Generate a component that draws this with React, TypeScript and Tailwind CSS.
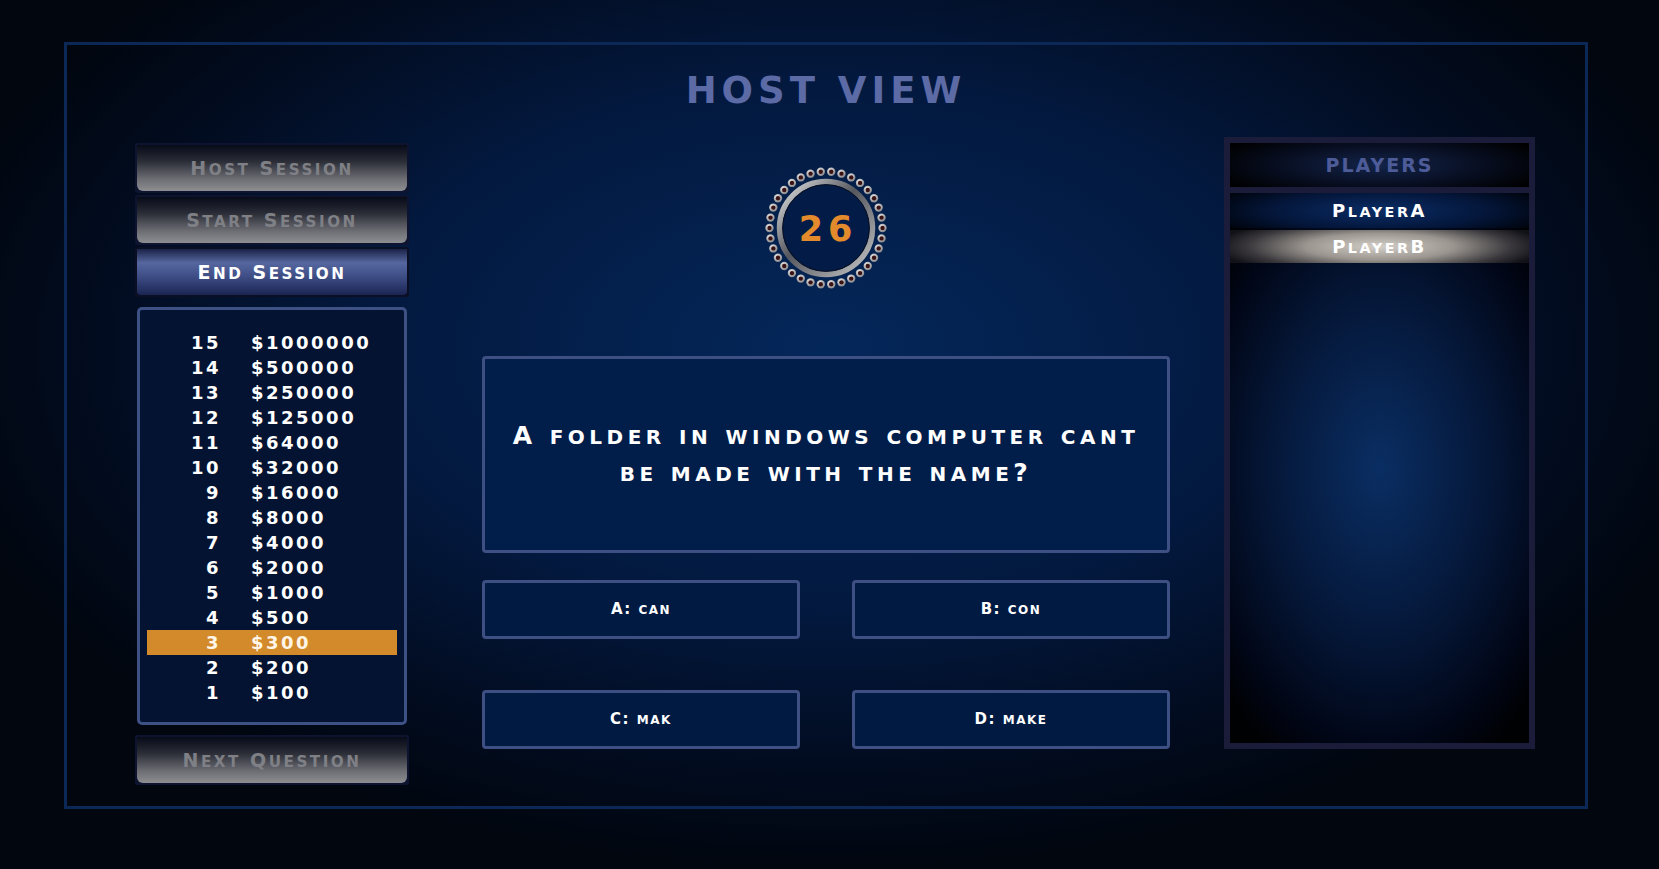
import React from "react";

const prizes = [
  [15, "$1000000"],
  [14, "$500000"],
  [13, "$250000"],
  [12, "$125000"],
  [11, "$64000"],
  [10, "$32000"],
  [9, "$16000"],
  [8, "$8000"],
  [7, "$4000"],
  [6, "$2000"],
  [5, "$1000"],
  [4, "$500"],
  [3, "$300"],
  [2, "$200"],
  [1, "$100"],
] as const;

const current = 3;

// copperplate-ish small caps: lowercase letters drawn as smaller capitals
function SmallCaps({ text }: { text: string }) {
  const runs: { lower: boolean; s: string }[] = [];
  for (const ch of text) {
    const lower = ch !== ch.toUpperCase();
    const last = runs[runs.length - 1];
    if (last && last.lower === lower) last.s += ch;
    else runs.push({ lower, s: ch });
  }
  return (
    <span>
      {runs.map((r, i) =>
        r.lower ? (
          <span key={i} className="text-[0.8em]">
            {r.s.toUpperCase()}
          </span>
        ) : (
          <React.Fragment key={i}>{r.s}</React.Fragment>
        )
      )}
    </span>
  );
}

function GreyButton({ label }: { label: string }) {
  return (
    <div className="p-[2px] bg-[#0e1430] rounded-[3px]">
      <div className="h-[46px] rounded-b-[6px] bg-[linear-gradient(to_bottom,#070b18_0%,#2a2c36_35%,#6e6f75_75%,#8d8e92_100%)] flex items-center justify-center text-[19px] font-bold tracking-[2.5px] text-[#7f8086]">
        <SmallCaps text={label} />
      </div>
    </div>
  );
}

function Timer({ value }: { value: number }) {
  const dots = Array.from({ length: 34 }, (_, i) => {
    const a = (i / 34) * Math.PI * 2;
    return { x: 65 + Math.cos(a) * 56.5, y: 65 + Math.sin(a) * 56.5 };
  });
  return (
    <svg width="130" height="130" viewBox="0 0 130 130">
      <defs>
        <linearGradient id="ring" x1="0" y1="0" x2="1" y2="1">
          <stop offset="0%" stopColor="#e6e6e6" />
          <stop offset="45%" stopColor="#55575e" />
          <stop offset="100%" stopColor="#c9c9c9" />
        </linearGradient>
        <radialGradient id="dot" cx="0.4" cy="0.35" r="0.7">
          <stop offset="0%" stopColor="#f4f4f4" />
          <stop offset="100%" stopColor="#7e7e82" />
        </radialGradient>
      </defs>
      {dots.map((d, i) => (
        <g key={i}>
          <circle cx={d.x} cy={d.y} r="4.2" fill="url(#dot)" />
          <circle cx={d.x} cy={d.y} r="2.2" fill="#3b1214" />
        </g>
      ))}
      <circle cx="65" cy="65" r="46.5" fill="#031c47" stroke="url(#ring)" strokeWidth="5.5" />
      <circle cx="65" cy="65" r="43.3" fill="none" stroke="#0a0f1e" strokeWidth="1" />
      <text
        x="67"
        y="78"
        textAnchor="middle"
        fontFamily="DejaVu Sans, sans-serif"
        fontWeight="bold"
        fontSize="35"
        letterSpacing="5"
        fill="#e38b2c"
      >
        {value}
      </text>
    </svg>
  );
}

function Answer({ label }: { label: string }) {
  return (
    <div className="h-[59px] border-[3px] border-[#3e4f83] rounded-[4px] bg-[#011a42] flex items-center justify-center text-white text-[15px] font-bold tracking-[1.5px]">
      <SmallCaps text={label} />
    </div>
  );
}

export default function App() {
  return (
    <div className="w-[1659px] h-[869px] overflow-hidden pt-[42px] pl-[64px] font-['DejaVu_Sans',sans-serif] bg-[radial-gradient(ellipse_55%_60%_at_50%_40%,#04275a_0%,#03193f_50%,#020c20_80%,#01060f_100%)]">
      <div className="w-[1524px] h-[767px] border-[3px] border-[#0c2857] flex flex-col">
        <div className="h-[92px] flex items-center justify-center text-[37px] font-bold tracking-[5px] text-[#5c6aa6]">
          HOST VIEW
        </div>

        <div className="flex items-start pl-[68px]">
          {/* left controls */}
          <div className="w-[274px] mt-[6px] flex flex-col">
            <div className="flex flex-col gap-[2px]">
              <GreyButton label="Host Session" />
              <GreyButton label="Start Session" />
              <div className="p-[2px] bg-[#0a0f24] rounded-[3px]">
                <div className="h-[46px] rounded-b-[4px] bg-[linear-gradient(to_bottom,#1a2348_0%,#56679f_30%,#3e4d86_60%,#1b2553_100%)] flex items-center justify-center text-[19px] font-bold tracking-[2.5px] text-white">
                  <SmallCaps text="End Session" />
                </div>
              </div>
            </div>

            <div className="mt-[10px] mx-[2px] h-[418px] border-[3px] border-[#3e5185] rounded-[5px] bg-[#031331] pt-[20px] px-[7px]">
              {prizes.map(([n, amt]) => (
                <div
                  key={n}
                  className={`h-[25px] flex items-center text-[18px] font-bold tracking-[2.5px] ${
                    n === current ? "bg-[#d38a2a] text-[#fff6e8]" : "text-white"
                  }`}
                >
                  <span className="w-[74px] text-right">{n}</span>
                  <span className="pl-[30px]">{amt}</span>
                </div>
              ))}
            </div>

            <div className="mt-[10px]">
              <GreyButton label="Next Question" />
            </div>
          </div>

          {/* center */}
          <div className="w-[688px] ml-[73px] flex flex-col items-center">
            <div className="mt-[26px]">
              <Timer value={26} />
            </div>
            <div className="mt-[63px] w-full h-[197px] border-[3px] border-[#3e4f83] rounded-[4px] bg-[#011d4a] flex items-center justify-center px-[12px]">
              <p className="text-center text-white text-[25px] font-bold leading-[36px] tracking-[4.5px]">
                <SmallCaps text="A folder in windows computer cant" />
                <br />
                <SmallCaps text="be made with the name?" />
              </p>
            </div>
            <div className="mt-[27px] w-full grid grid-cols-2 gap-x-[52px] gap-y-[51px]">
              <Answer label="A: can" />
              <Answer label="B: con" />
              <Answer label="C: mak" />
              <Answer label="D: make" />
            </div>
          </div>

          {/* players */}
          <div className="ml-[54px] w-[311px] h-[612px] bg-[#1b1c3a] p-[6px] flex flex-col gap-[6px]">
            <div className="h-[44px] bg-[radial-gradient(ellipse_60%_80%_at_50%_50%,#13244a_0%,#070d1f_60%,#000000_100%)] flex items-center justify-center text-[19px] font-bold tracking-[2px] text-[#4d5c98]">
              PLAYERS
            </div>
            <div className="flex-1 bg-[radial-gradient(ellipse_70%_60%_at_50%_50%,#0a2e63_0%,#05183a_50%,#010616_85%,#000103_100%)]">
              <div className="h-[35px] bg-[radial-gradient(ellipse_60%_90%_at_50%_50%,#0a2d66_0%,#04163a_60%,#00040c_100%)] flex items-center justify-center text-white text-[18px] font-bold tracking-[2.5px]">
                <SmallCaps text="PlayerA" />
              </div>
              <div className="mt-[2px] h-[33px] bg-[radial-gradient(ellipse_55%_90%_at_50%_50%,#d4cfc9_0%,#9a958f_45%,#3a383c_80%,#111218_100%)] flex items-center justify-center text-white text-[18px] font-bold tracking-[2.5px]">
                <SmallCaps text="PlayerB" />
              </div>
            </div>
          </div>
        </div>
      </div>
    </div>
  );
}
